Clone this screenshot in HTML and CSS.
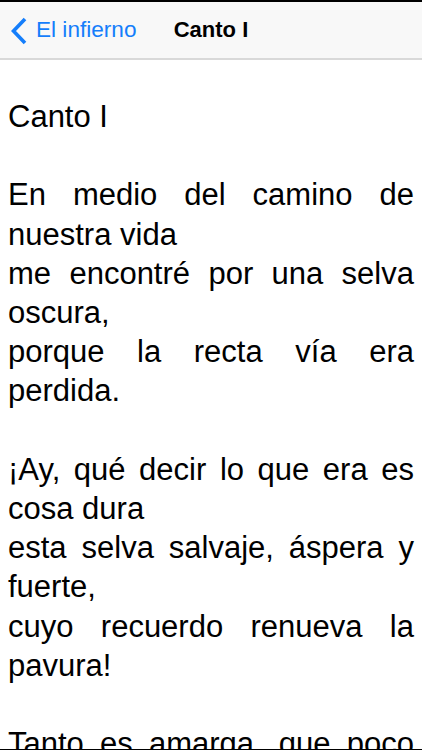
FILE: index.html
```html
<!DOCTYPE html>
<html lang="es">
<head>
<meta charset="utf-8">
<title>Canto I</title>
<link rel="stylesheet" href="styles.css">
</head>
<body>
<div class="screen">
  <div class="statusline"></div>
  <header class="nav">
    <a class="back" href="#">
      <svg class="chev" width="18" height="28" viewBox="0 0 18 28" aria-hidden="true">
        <path d="M15 2 L3.5 14 L15 26" fill="none" stroke="#157efb" stroke-width="3.6" stroke-linecap="butt" stroke-linejoin="miter"/>
      </svg>
      <span class="back-label">El infierno</span>
    </a>
    <h1 class="title">Canto I</h1>
    <span class="spacer"></span>
  </header>
  <main class="content">
    <p class="verse">Canto I</p>
    <p class="stanza-gap">&nbsp;</p>
    <p class="verse">En medio del camino de nuestra vida</p>
    <p class="verse">me encontré por una selva oscura,</p>
    <p class="verse">porque la recta vía era perdida.</p>
    <p class="stanza-gap">&nbsp;</p>
    <p class="verse">¡Ay, qué decir lo que era es cosa dura</p>
    <p class="verse">esta selva salvaje, áspera y fuerte,</p>
    <p class="verse">cuyo recuerdo renueva la pavura!</p>
    <p class="stanza-gap">&nbsp;</p>
    <p class="verse">Tanto es amarga, que poco es más la muerte:</p>
  </main>
  <div class="bottomline"></div>
</div>
</body>
</html>
```

FILE: styles.css
```css
html, body {
  margin: 0;
  padding: 0;
  background: #ffffff;
}

.screen {
  width: 422px;
  height: 750px;
  overflow: hidden;
  position: relative;
  font-family: "Liberation Sans", Arial, sans-serif;
  color: #000;
}

.statusline {
  height: 2px;
  background: #000;
}

.nav {
  height: 56px;
  background: #f8f8f8;
  border-bottom: 2px solid #d9d9d9;
  display: grid;
  grid-template-columns: 1fr auto 1fr;
  align-items: center;
}

.back {
  display: flex;
  align-items: center;
  text-decoration: none;
  color: #157efb;
  padding-left: 10px;
}

.chev {
  display: block;
  margin-top: 1px;
}

.back-label {
  font-size: 22.6px;
  margin-left: 8px;
  line-height: 1;
}

.title {
  margin: 0;
  font-size: 22px;
  font-weight: bold;
  line-height: 1;
}

.content {
  padding: 37px 8px 0 8px;
  font-size: 31px;
  line-height: 39.2px;
}

.verse,
.stanza-gap {
  margin: 0;
  text-align: justify;
}

.bottomline {
  position: absolute;
  left: 0;
  right: 0;
  bottom: 0;
  height: 1px;
  background: #000;
}
```
